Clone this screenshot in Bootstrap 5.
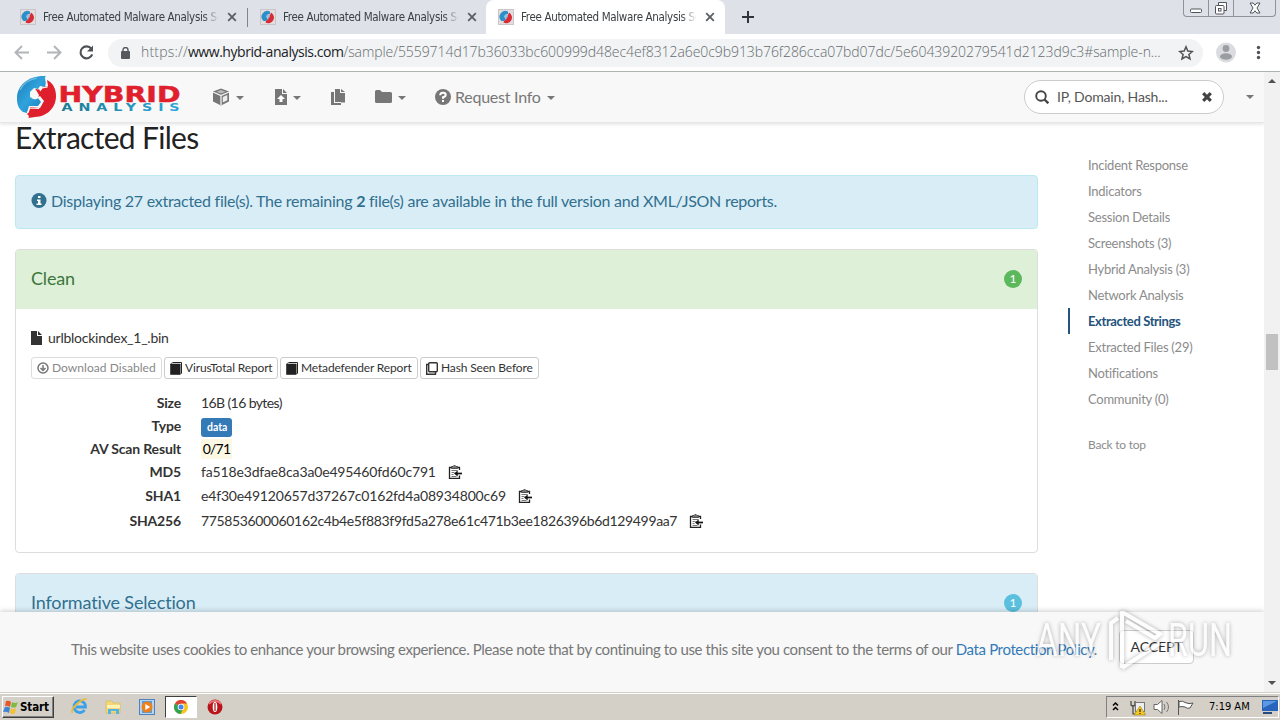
<!DOCTYPE html>
<html lang="en">
<head>
    <meta charset="UTF-8">
    <meta name="viewport" content="width=device-width, initial-scale=1.0">
    <title>Free Automated Malware Analysis Service</title>
    <link href="https://cdn.jsdelivr.net/npm/bootstrap@5.3.0/dist/css/bootstrap.min.css" rel="stylesheet">
    <style>
        body { width: 1280px; height: 720px; overflow: hidden; font-family: Lato, "Open Sans", sans-serif; font-size: 14px; line-height: 20px; color: #333; background: #fff; }
        svg { display: block; flex: none; }

        /* Browser tabs */
        .tab-strip { height: 34px; background: #dee1e8; font: 12px/34px "DejaVu Sans Condensed", "DejaVu Sans", sans-serif; color: #3c4043; }
        .browser-tab { width: 239px; height: 34px; padding-left: 20px; }
        .browser-tab.first { width: 248px; }
        .browser-tab.second { width: 238px; padding-left: 12px; position: relative; }
        .browser-tab.second::before { content: ""; position: absolute; left: -1px; top: 8px; width: 1px; height: 19px; background: #80858c; }
        .browser-tab.current { background: #fff; border-radius: 8px 8px 0 0; padding-left: 12px; }
        .tab-title { width: 175px; margin-left: 7px; overflow: hidden; white-space: nowrap; font-size: 11.5px; letter-spacing: -.34px; -webkit-mask-image: linear-gradient(90deg, #000 160px, transparent 176px); }
        .tab-close { margin-left: 9px; }
        .win-buttons { width: 93px; height: 17px; border: 1px solid #8d929b; border-top: 0; border-radius: 0 0 4px 4px; margin-right: 4px; }
        .win-buttons span { width: 25px; border-right: 1px solid #8d929b; height: 16px; }
        .win-buttons span:last-child { border: 0; }

        /* Address bar */
        .address-row { height: 38px; border-bottom: 1px solid #aeb5b0; background: #fff; }
        .address-box { width: 1095px; height: 28px; border-radius: 14px; background: #f1f3f4; padding-left: 13px; }
        .address-text { flex: none; width: 1030px; margin: 0 7px 0 11px; padding-bottom: 2px; font: 300 14px/26px "Open Sans", sans-serif; letter-spacing: -.07px; color: #666b70; white-space: nowrap; }
        .address-text b { font-weight: 400; color: #202124; letter-spacing: -.46px; }
        .scheme { letter-spacing: .2px; }

        /* Site header */
        .page-view { height: 620px; }
        .site-page { width: 1264px; position: relative; overflow: hidden; }
        .site-nav { height: 51px; background: #f8f8f8; border-bottom: 1px solid #e7e7e7; box-shadow: 0 1px 4px rgba(0,0,0,.13); position: relative; z-index: 2; color: #777; }
        .nav-item-box { height: 50px; padding-bottom: 1px; }
        .item-box { width: 61px; padding-left: 16px; }
        .item-upload { width: 57px; padding-left: 18px; }
        .item-copies { width: 46px; padding-left: 17px; }
        .item-folder { width: 60px; padding-left: 15px; }
        .item-request { padding-left: 15px; font-size: 16px; letter-spacing: -.25px; }
        .caret-down { width: 0; height: 0; border: 4px solid transparent; border-top-color: #777; border-bottom: 0; margin: 2px 0 0 6px; }
        .caret-end { margin: 0 10px 0 22px; }
        .search-box { width: 200px; height: 34px; border: 1px solid #ccc; border-radius: 17px; background: #fff; color: #555; font-size: 14px; letter-spacing: -.17px; padding: 0 11px 0 10px; }

        /* Report */
        .report { width: 1023px; margin-left: 15px; }
        .report-title { font-size: 30px; line-height: 29px; margin: 0 0 23px; letter-spacing: -.7px; font-weight: 400; color: #222; }
        .info-note { height: 54px; border: 1px solid #bce8f1; border-radius: 4px; background: #d9edf7; color: #31708f; font-size: 16px; letter-spacing: -.265px; margin-bottom: 20px; padding: 0 0 2px 15px; }
        .result-card { border: 1px solid #ddd; border-radius: 4px; margin-bottom: 20px; }
        .result-head { height: 59px; padding: 0 15px; font-size: 18px; letter-spacing: -.15px; border-radius: 3px 3px 0 0; }
        .result-head > span:first-child { padding-bottom: 4px; }
        .head-clean { background: #dff0d8; color: #3c763d; }
        .head-info { background: #d9edf7; color: #31708f; }
        .count-dot { width: 18px; height: 18px; border-radius: 9px; color: #fff; font-size: 12px; line-height: 18px; text-align: center; margin-bottom: 2px; }
        .dot-clean { background: #5cb85c; }
        .dot-info { background: #5bc0de; }
        .result-body { height: 243px; padding: 19px 15px 0; }
        .file-name { letter-spacing: -.25px; margin-left: 6px; }
        .tool-row { gap: 2px; margin: 9px 0 12px; }
        .tool-btn { height: 22px; border: 1px solid #ccc; border-radius: 3px; font-size: 12px; line-height: 20px; letter-spacing: -.15px; padding: 0 5px; white-space: nowrap; }
        .tool-btn svg { margin-right: 3px; }
        .tool-btn.off { width: 131px; color: #888; border-color: #ddd; letter-spacing: .05px; }
        .tool-vt { width: 114px; }
        .tool-md { width: 138px; }
        .tool-hash { width: 119px; }
        .fact { height: 23px; }
        .fact.tall { height: 25px; padding-top: 1px; }
        .fact dt { width: 150px; text-align: right; margin-right: 20px; font-weight: 700; letter-spacing: -.16px; }
        .fact dd { margin: 0; }
        .fact svg { margin-left: 12px; }
        .size-val { letter-spacing: -.6px; }
        .fact .type-tag { background: #337ab7; color: #fff; font-size: 10.5px; font-weight: 700; line-height: 18px; border-radius: 3px; padding: 0 6px; width: 31px; height: 19px; margin-top: 3px; }
        .scan-tag { background: #fcf8e3; color: #000; width: 31px; text-align: center; letter-spacing: -.8px; }
        .hash-md5 { letter-spacing: -.15px; }
        .hash-sha1 { letter-spacing: -.18px; }
        .hash-sha256 { letter-spacing: -.36px; }

        /* Section list */
        .section-list { width: 180px; margin-left: 30px; padding-top: 29px; font-size: 13px; letter-spacing: -.25px; }
        .section-list a { display: block; height: 26px; line-height: 26px; padding-left: 20px; color: #8c8c8c; text-decoration: none; white-space: nowrap; }
        .section-list a.active { border-left: 2px solid #23527c; padding-left: 18px; color: #23527c; font-weight: 700; letter-spacing: -.38px; }
        .section-list a.to-top { font-size: 12px; margin-top: 20px; }

        /* Cookie bar lies over the report */
        .cookie-bar { position: absolute; left: 0; right: 0; bottom: 0; height: 80px; background: #f8f8f8; box-shadow: 0 -1px 5px rgba(0,0,0,.2); z-index: 3; font-size: 15px; letter-spacing: -.378px; color: #777; padding-left: 71px; }
        .cookie-text { width: 1048px; white-space: nowrap; padding-top: 27px; line-height: 20px; }
        .cookie-text a { color: #337ab7; text-decoration: none; }
        .accept-btn { width: 75px; height: 34px; border: 1px solid #ccc; border-radius: 4px; background: #fff; color: #333; font-size: 14px; line-height: 32px; letter-spacing: -.1px; text-align: center; margin-top: 18px; }
        .run-mark { position: absolute; left: 1036px; bottom: 18px; z-index: 4; opacity: .6; filter: drop-shadow(0 0 2px rgba(0,0,0,.5)); }

        .page-scroll { width: 16px; background: #f1f1f1; }
        .scroll-thumb { width: 12px; height: 36px; background: #c1c1c1; margin: 0 0 60px 2px; }

        /* Taskbar */
        .taskbar { height: 28px; background: #d4d0c8; border-top: 1px solid #d4d0c8; box-shadow: inset 0 1px 0 #fff; font: 11px/20px "DejaVu Sans Condensed", sans-serif; color: #000; }
        .start-btn { width: 52px; height: 22px; margin-left: 2px; border: 1px solid #fff; border-right-color: #404040; border-bottom-color: #404040; box-shadow: inset -1px -1px 0 #808080; font-size: 11.5px; font-weight: 700; letter-spacing: -.1px; }
        .start-btn span { margin-left: 1px; }
        .task-open { width: 32px; height: 22px; background: #fff; border: 1px solid #404040; border-right-color: #fff; border-bottom-color: #fff; }
        .task-opera { margin-left: 10px; }
        .tray { width: 173px; height: 22px; margin-right: 1px; border: 1px solid #808080; border-right-color: #fff; border-bottom-color: #fff; }
        .clock { margin-left: 5px; }
    </style>
</head>
<body class="d-flex flex-column">
    <svg width="0" height="0" class="position-absolute">
        <defs>
            <linearGradient id="blueBall" x1="0" y1="0" x2="1" y2="1"><stop offset="0" stop-color="#1d78b4"/><stop offset=".5" stop-color="#2fa3dc"/><stop offset="1" stop-color="#1a7cba"/></linearGradient>
            <linearGradient id="wordBlue"><stop offset="0" stop-color="#1b7c93"/><stop offset="1" stop-color="#2da9e0"/></linearGradient>
            <symbol id="favicon" viewBox="0 0 16 16"><rect x=".5" y=".5" width="15" height="15" fill="#e4dddd" stroke="#c9c5c8"/><path d="M10 2.500A5.800 5.800 0 0 0 3.500 12L6 12l2-1.500L6.500 8 8 5.500l2-.5z" fill="#2b8fc9"/><path d="M11 3.500a5.600 5.600 0 0 1-5.500 10L6 12l2.500-2L8 8l2-2z" fill="#d92b35"/><circle cx="8" cy="7.300" r="1.700" fill="#8fc4e4"/></symbol>
            <symbol id="close" viewBox="0 0 10 10"><path d="M1.200 1.200l7.600 7.600M8.800 1.200L1.200 8.800" stroke="#5a5f64" stroke-width="1.800"/></symbol>
            <symbol id="book" viewBox="0 0 12 13"><path d="M2.500.5h9v10.700" fill="none" stroke="#222"/><path d="M.5 2.200L2.300.5M.5 2h9.700v10.500H.5z" fill="#222" stroke="#222" stroke-width=".6"/><path d="M10.500 12l1-1" stroke="#222"/></symbol>
            <symbol id="clip" viewBox="0 0 14 14"><path d="M3.500 2.500h-2v11h10v-3M11.500 5V2.500h-2" fill="none" stroke="#222" stroke-width="1.300"/><path d="M3.500 1.500H5L6.500 0 8 1.500h1.500v2h-6z" fill="#777" stroke="#222" stroke-width=".7"/><path d="M3.500 5.500h6M3.500 7.500h3M3.500 9.500h2M3.500 11.500h5" stroke="#777"/><path d="M14 8.500H9" stroke="#111" stroke-width="1.700"/><path d="M6 8.500l3.700-3.100v6.200z" fill="#111"/></symbol>
        </defs>
    </svg>

    <!-- Tabs -->
    <div class="tab-strip d-flex">
        <div class="browser-tab first d-flex align-items-center"><svg width="16" height="16"><use href="#favicon"/></svg><span class="tab-title">Free Automated Malware Analysis Service</span><svg class="tab-close" width="10" height="10"><use href="#close"/></svg></div>
        <div class="browser-tab second d-flex align-items-center"><svg width="16" height="16"><use href="#favicon"/></svg><span class="tab-title">Free Automated Malware Analysis Service</span><svg class="tab-close" width="10" height="10"><use href="#close"/></svg></div>
        <div class="browser-tab current d-flex align-items-center"><svg width="16" height="16"><use href="#favicon"/></svg><span class="tab-title">Free Automated Malware Analysis Service</span><svg class="tab-close" width="10" height="10"><use href="#close"/></svg></div>
        <div class="d-flex align-items-center ps-3"><svg width="13" height="12"><path d="M7 0v12M1 6h12" stroke="#30353c" stroke-width="2"/></svg></div>
        <div class="win-buttons d-flex ms-auto">
            <span class="d-flex justify-content-center"><svg width="14" height="16"><rect x="1.500" y="9" width="11" height="3.500" rx="1" fill="#fff" stroke="#50555c"/></svg></span>
            <span class="d-flex justify-content-center"><svg width="14" height="16"><path d="M4.500 5V2.500h8v8H10" fill="#fff" stroke="#50555c"/><rect x="1.500" y="5.500" width="8.500" height="8.500" rx="1" fill="#fff" stroke="#50555c"/><rect x="4.500" y="8.500" width="2.500" height="2.500" fill="none" stroke="#50555c"/></svg></span>
            <span class="d-flex justify-content-center flex-grow-1"><svg width="14" height="16"><path d="M2 3h3.200L7 5.200 8.800 3H12L9 8l3 5H8.800L7 10.800 5.200 13H2l3-5z" fill="#fff" stroke="#50555c"/></svg></span>
        </div>
    </div>

    <!-- Address bar -->
    <div class="address-row d-flex align-items-center">
        <svg width="108" height="36" fill="none" stroke-width="1.900"><path d="M29 17.500H16M22 11l-6.500 6.500L22 24M47 17.500h13M54 11l6.500 6.500L54 24" stroke="#b2b4b7"/><path d="M91.300 13.700a6 6 0 1 0 .9 5.600" stroke="#4e5256" stroke-width="2.100"/><path d="M93 10.500v6h-6z" fill="#4e5256"/></svg>
        <div class="address-box d-flex align-items-center">
            <svg width="9" height="12"><rect y="4" width="9" height="8" rx="1" fill="#55595d"/><path d="M2 5V3a2.500 2.500 0 0 1 5 0v2" fill="none" stroke="#55595d" stroke-width="1.400"/></svg>
            <div class="address-text"><span class="scheme">https://</span><b>www.hybrid-analysis.com</b>/sample/5559714d17b36033bc600999d48ec4ef8312a6e0c9b913b76f286cca07bd07dc/5e6043920279541d2123d9c3#sample-n...</div>
            <svg width="16" height="16" viewBox="0 0 16 16"><path d="M8 1.800l1.800 4.300 4.600.4-3.500 3 1.100 4.500L8 11.600 4 14l1.100-4.500-3.500-3 4.600-.4z" fill="none" stroke="#505458" stroke-width="1.500"/></svg>
        </div>
        <svg width="77" height="36"><circle cx="23" cy="17.500" r="10" fill="#dadce0"/><circle cx="23" cy="13.500" r="3.400" fill="#9a9da1"/><ellipse cx="23" cy="21.500" rx="6" ry="3.300" fill="#9a9da1"/><g fill="#505458"><circle cx="55.500" cy="12.500" r="1.700"/><circle cx="55.500" cy="17.500" r="1.700"/><circle cx="55.500" cy="22.500" r="1.700"/></g></svg>
    </div>

    <!-- Page -->
    <div class="page-view d-flex">
        <div class="site-page">
            <nav class="site-nav d-flex align-items-center">
                <svg width="196" height="50" viewBox="0 72 196 50">
                    <path d="M46 75l-1 3 1 4-1 5-5-1-2 3-4-1-4 4 0 5 4 2 4-1 3 4-3 4-9 0-2 7-4-1c-5-4-6-8-6-14C17 85 29 75 46 76z" fill="url(#blueBall)"/>
                    <path d="M47 80c6 3 9 9 9 16 0 12-9 20.500-21 21L28.500 118l.500-2-2-2 2-2 1-5 10 1 4-7-4-5-4 2-3-1-1-3 4-5 5 1 2-3 5-1z" fill="#df1f2c"/>
                    <path d="M36 90a4.700 4.700 0 1 0 2 8l1-3z" fill="#f8f8f8"/>
                    <path d="M46 79.500l1 7.500-5 1-2 3M41.500 104l-3 4.500-9-.5-2 5" fill="none" stroke="#f8f8f8" stroke-width="1.200"/>
                    <path d="M20 90q5-10 17-12" fill="none" stroke="#8fd0f0" stroke-width="1.600" opacity=".6"/>
                    <text x="58.500" y="102" font-family="DejaVu Sans" font-weight="700" font-size="22" textLength="122" lengthAdjust="spacingAndGlyphs" fill="#e0202d" stroke="#e0202d" stroke-width=".5">HYBRID</text>
                    <text x="61.500" y="111.300" font-family="DejaVu Sans" font-weight="700" font-size="9.800" letter-spacing="4" textLength="124" lengthAdjust="spacingAndGlyphs" fill="url(#wordBlue)">ANALYSIS</text>
                </svg>
                <div class="nav-item-box item-box d-flex align-items-center"><svg width="18" height="18" viewBox="0 0 18 18"><path d="M9 .5l8 3v10l-8 4-8-4v-10z" fill="#777"/><path d="M1 4l8 3.500L17 4M9 7v10" stroke="#f8f8f8" stroke-width="1.200" fill="none"/><path d="M9 2l4.500 1.700L9 5.500 4.500 3.700z" fill="#bbb"/><path d="M10.800 9l4.500-2v5.300l-4.500 2.200z" fill="#eee"/></svg><i class="caret-down"></i></div>
                <div class="nav-item-box item-upload d-flex align-items-center"><svg width="12" height="16"><path d="M0 0h7v5h5v11H0zM8 0l4 4H8z" fill="#777"/><path d="M6 6l4 4H7.500v3h-3v-3H2z" fill="#fff"/></svg><i class="caret-down"></i></div>
                <div class="nav-item-box item-copies d-flex align-items-center"><svg width="14" height="16" fill="#777"><path d="M4 0h5v4h5v12H4zM10 0l4 3h-4z"/><path d="M0 3h3v11h0v2H0z"/><path d="M3.500 3v13" stroke="#f8f8f8"/><path d="M0 14h10v2H0z"/><path d="M10 13.500h4V16h-4z" fill="#f8f8f8"/><path d="M3 13.500h7" stroke="#f8f8f8"/></svg></div>
                <div class="nav-item-box item-folder d-flex align-items-center"><svg width="17" height="13"><path d="M0 1.500Q0 0 1.500 0H5l2 2h8.500Q17 2 17 3.500v8q0 1.500-1.500 1.500h-14Q0 13 0 11.500z" fill="#777"/></svg><i class="caret-down"></i></div>
                <div class="nav-item-box item-request d-flex align-items-center"><svg width="16" height="16"><circle cx="8" cy="8" r="8" fill="#777"/><path d="M5.200 6.200Q5.300 3.800 8 3.800t2.700 2.200Q10.700 7.500 8 8.200v1.500" fill="none" stroke="#fff" stroke-width="2"/><rect x="7" y="11" width="2" height="2" fill="#fff"/></svg><span class="ms-1">Request Info</span><i class="caret-down"></i></div>
                <div class="search-box d-flex align-items-center ms-auto">
                    <svg width="14" height="14"><circle cx="6" cy="6" r="4.800" fill="none" stroke="#444" stroke-width="1.900"/><path d="M9.500 9.500l3.800 3.800" stroke="#444" stroke-width="2.300"/></svg>
                    <span class="ms-2">IP, Domain, Hash...</span>
                    <svg class="ms-auto" width="10" height="10"><path d="M1.200 1.200l7.600 7.600M8.800 1.200L1.200 8.800" stroke="#444" stroke-width="3.200"/></svg>
                </div>
                <i class="caret-down caret-end"></i>
            </nav>

            <div class="d-flex">
                <main class="report">
                    <h2 class="report-title">Extracted Files</h2>
                    <div class="info-note d-flex align-items-center">
                        <svg width="16" height="16" class="me-1"><circle cx="8" cy="7.500" r="7.500" fill="#31708f"/><path d="M7 3h2.500v2H7zM6 6.500h3.500v4h1V12h-5v-1.500H7V8H6z" fill="#fff"/></svg>
                        <span>Displaying 27 extracted file(s). The remaining <b>2</b> file(s) are available in the full version and XML/JSON reports.</span>
                    </div>

                    <section class="result-card">
                        <div class="result-head head-clean d-flex align-items-center justify-content-between"><span>Clean</span><span class="count-dot dot-clean">1</span></div>
                        <div class="result-body">
                            <div class="d-flex align-items-center"><svg width="11" height="14"><path d="M0 0h6v5h5v9H0zM7 0l4 4H7z" fill="#333"/></svg><span class="file-name">urlblockindex_1_.bin</span></div>
                            <div class="tool-row d-flex">
                                <span class="tool-btn off d-flex align-items-center"><svg width="12" height="12" fill="none" stroke="#777"><circle cx="6" cy="6" r="5" stroke-width="1.500"/><path d="M6 3v5M3.500 6L6 8.500 8.500 6" stroke-width="1.500"/></svg>Download Disabled</span>
                                <span class="tool-btn tool-vt d-flex align-items-center"><svg width="12" height="13"><use href="#book"/></svg>VirusTotal Report</span>
                                <span class="tool-btn tool-md d-flex align-items-center"><svg width="12" height="13"><use href="#book"/></svg>Metadefender Report</span>
                                <span class="tool-btn tool-hash d-flex align-items-center"><svg width="12" height="13" fill="none" stroke="#333" stroke-width="1.400"><rect x="2.700" y=".7" width="8.600" height="9" rx="1"/><path d="M2.700 2.500H.7v9.800h8.800V9.700"/></svg>Hash Seen Before</span>
                            </div>
                            <dl class="m-0">
                                <div class="fact d-flex align-items-center"><dt>Size</dt><dd class="size-val">16B (16 bytes)</dd></div>
                                <div class="fact d-flex align-items-center"><dt>Type</dt><dd class="type-tag">data</dd></div>
                                <div class="fact d-flex align-items-center"><dt>AV Scan Result</dt><dd class="scan-tag">0/71</dd></div>
                                <div class="fact d-flex align-items-center"><dt>MD5</dt><dd class="hash-md5">fa518e3dfae8ca3a0e495460fd60c791</dd><svg width="14" height="14"><use href="#clip"/></svg></div>
                                <div class="fact tall d-flex align-items-center"><dt>SHA1</dt><dd class="hash-sha1">e4f30e49120657d37267c0162fd4a08934800c69</dd><svg width="14" height="14"><use href="#clip"/></svg></div>
                                <div class="fact tall d-flex align-items-center"><dt>SHA256</dt><dd class="hash-sha256">775853600060162c4b4e5f883f9fd5a278e61c471b3ee1826396b6d129499aa7</dd><svg width="14" height="14"><use href="#clip"/></svg></div>
                            </dl>
                        </div>
                    </section>

                    <section class="result-card">
                        <div class="result-head head-info d-flex align-items-center justify-content-between"><span>Informative Selection</span><span class="count-dot dot-info">1</span></div>
                    </section>
                </main>

                <aside class="section-list">
                    <a href="#">Incident Response</a>
                    <a href="#">Indicators</a>
                    <a href="#">Session Details</a>
                    <a href="#">Screenshots (3)</a>
                    <a href="#">Hybrid Analysis (3)</a>
                    <a href="#">Network Analysis</a>
                    <a href="#" class="active">Extracted Strings</a>
                    <a href="#">Extracted Files (29)</a>
                    <a href="#">Notifications</a>
                    <a href="#">Community (0)</a>
                    <a href="#" class="to-top">Back to top</a>
                </aside>
            </div>

            <div class="cookie-bar d-flex align-items-start">
                <div class="cookie-text">This website uses cookies to enhance your browsing experience. Please note that by continuing to use this site you consent to the terms of our <a href="#">Data Protection Policy</a>.</div>
                <div class="accept-btn">ACCEPT</div>
            </div>

            <svg class="run-mark" width="200" height="68" viewBox="0 0 200 68">
                <g font-family="Roboto" font-size="46" fill="#fff">
                    <text x="0" y="50" textLength="65" lengthAdjust="spacingAndGlyphs">ANY</text>
                    <text x="132" y="50" textLength="64" lengthAdjust="spacingAndGlyphs">RUN</text>
                </g>
                <path d="M75 54V17l7-5M86 5v57M86 6l38 22-5 4L90 15M86 62l38-25" fill="none" stroke="#fff" stroke-width="4"/>
            </svg>
        </div>

        <div class="page-scroll d-flex flex-column justify-content-between align-items-start">
            <svg width="16" height="16"><path d="M4 11l4-4 4 4z" fill="#505050"/></svg>
            <div class="scroll-thumb"></div>
            <svg width="16" height="16"><path d="M4 5l4 4 4-4z" fill="#505050"/></svg>
        </div>
    </div>

    <!-- Taskbar -->
    <div class="taskbar d-flex align-items-center">
        <div class="start-btn d-flex align-items-center"><svg width="16" height="16" viewBox="0 0 16 16"><path d="M3 2q3-1 5 1L7 8Q4 6 2 7z" fill="#e8572a"/><path d="M9 3q3 2 6 0l-2 5q-3 1-5 0z" fill="#7dbb42"/><path d="M2 8q3-1 5 1l-1 5Q3 12 0 13z" fill="#3f85d6"/><path d="M8 9q2 2 5 0l-1 5q-3 2-5 0z" fill="#f6c12e"/></svg><span>Start</span></div>
        <svg width="111" height="24" viewBox="54 0 111 24">
            <g transform="translate(71 3)"><path d="M13.500 12A5.800 5.800 0 1 1 14.500 9H5" fill="none" stroke="#3aa0e8" stroke-width="2.800"/><path d="M1.500 15Q-1 12 6 6T15.500 1.500" fill="none" stroke="#e8bd36" stroke-width="1.800"/></g>
            <g transform="translate(106 5)"><path d="M0 1h6l1 2h7v10H0z" fill="#f3d778" stroke="#d3b253" stroke-width=".6"/><path d="M1 5h13v3H1z" fill="#fff3b4"/><path d="M2 14V9h11v5h-3v-3H5v3z" fill="#56b3de"/></g>
            <g transform="translate(139 4)"><rect x=".5" y=".5" width="15" height="15" fill="#b8d5ef" stroke="#4a83bf"/><rect x="3" y="2" width="10" height="12" fill="#5a99d8"/><circle cx="8" cy="8" r="5.500" fill="#ef7f1a"/><path d="M6.300 5l5 3-5 3z" fill="#fff"/></g>
        </svg>
        <div class="task-open d-flex align-items-center justify-content-center"><svg width="14" height="14" viewBox="0 0 14 14"><circle cx="7" cy="7" r="7" fill="#f6c51d"/><path d="M7 7L.9 3.500A7 7 0 0 1 13.100 3.500H7z" fill="#dd4335"/><path d="M7 7L.9 3.500A7 7 0 0 0 6.500 14L9 9z" fill="#35a155"/><circle cx="7" cy="7" r="3.300" fill="#fff"/><circle cx="7" cy="7" r="2.500" fill="#4284f0"/></svg></div>
        <svg class="task-opera" width="16" height="16"><circle cx="8" cy="8" r="7.500" fill="#b81419"/><path d="M2 5a7 6 0 0 1 12 0" fill="none" stroke="#e8777a" stroke-width="2"/><ellipse cx="8" cy="8" rx="2.300" ry="5" fill="#fff"/><path d="M8 4v8" stroke="#a81015" stroke-width="1.200"/></svg>
        <div class="tray d-flex align-items-center ms-auto">
            <svg width="97" height="20" fill="none"><path d="M6 8.500L8.500 6 11 8.500M6 13l2.500-2.500L11 13" stroke="#000" stroke-width="1.500"/><path d="M24 4v4q2 2 4 0V4M26 9v8h4" stroke="#444" stroke-width="1.200"/><rect x="28.500" y="5.500" width="9" height="9" fill="#eee" stroke="#777"/><path d="M27 18h11.500L33 9z" fill="#f5c91e" stroke="#9a7d10" stroke-width=".6"/><path d="M33 12v3m0 1v1" stroke="#222" stroke-width="1.200"/><path d="M47 7.500h3.500L55 3.500v13l-4.500-4H47z" fill="#fff" stroke="#666"/><path d="M57 7q2 3 0 6M59.500 5q4 5 0 10" stroke="#777"/><path d="M71.500 3v15M72 4.500q4-1 6 1 4 2 8 .5l-3 5q-3 1-5-1-3-1-6 0z" fill="#fff" stroke="#555"/></svg>
            <span class="clock">7:19 AM</span>
            <svg class="ms-auto" width="16" height="14"><rect width="16" height="11" fill="#2864bc"/><path d="M1 1h14L1 8z" fill="#5b98e4"/><path d="M1 12h9v2H1z" fill="#264a80"/></svg>
        </div>
    </div>

    <script src="https://cdn.jsdelivr.net/npm/bootstrap@5.3.0/dist/js/bootstrap.bundle.min.js"></script>
</body>
</html>
